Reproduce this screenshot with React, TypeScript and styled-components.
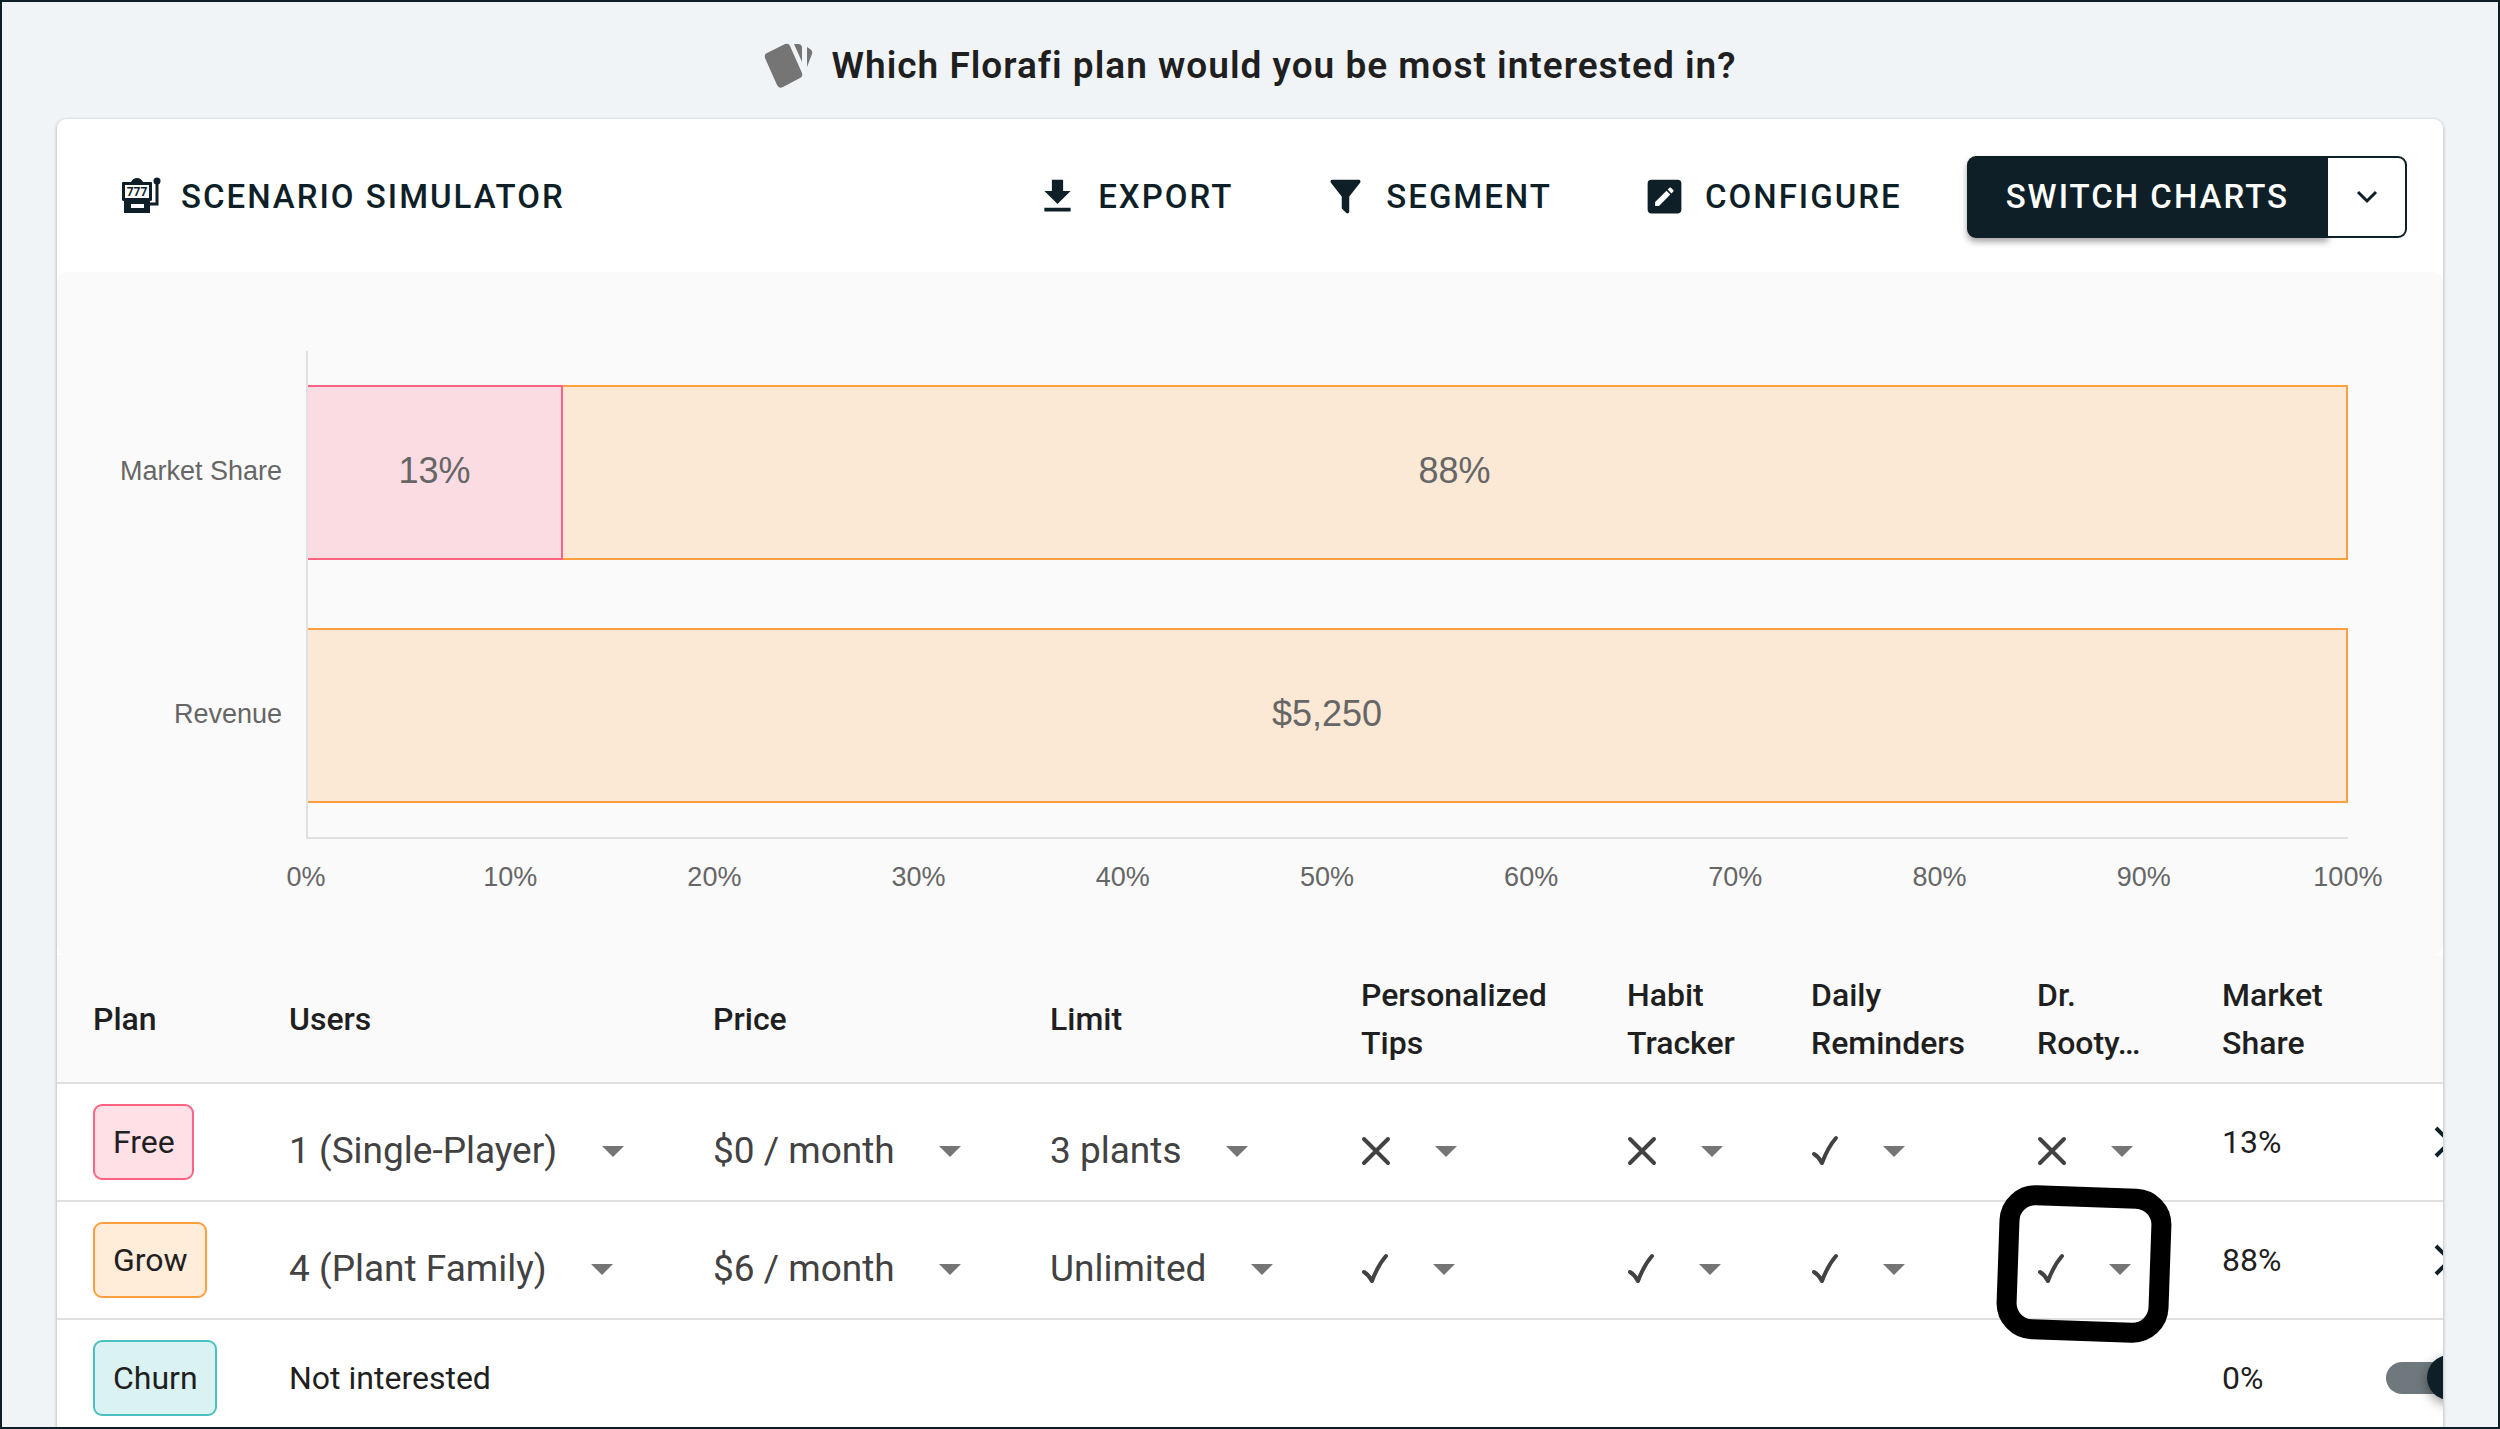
import React from "react";
import styled, { createGlobalStyle } from "styled-components";

const ink = "#0f1f27";
const line = "#e0e0e0";

const GlobalStyle = createGlobalStyle`
  *, *::before, *::after { box-sizing: border-box; }
  body {
    margin: 0;
    font-family: Roboto, "Liberation Sans", sans-serif;
    color: #1f1f1f;
    background: #f0f4f7;
  }
  button, select { font: inherit; }
`;

const Page = styled.main`
  height: 100vh;
  overflow: hidden;
  padding: 0 55px;
  border: 2px solid ${ink};
  background: #f0f4f7;
`;

const Heading = styled.header`
  display: flex;
  align-items: center;
  justify-content: center;
  gap: 18px;
  height: 117px;
  padding-top: 10px;

  h1 {
    margin: 0;
    font-size: 37px;
    font-weight: 600;
    line-height: 54px;
    letter-spacing: 1px;
  }
`;

const Card = styled.section`
  overflow: hidden;
  background: #fff;
  border-radius: 9px;
  box-shadow: 0 2px 4px rgba(0, 0, 0, 0.2), 0 0 3px rgba(0, 0, 0, 0.12);
`;

const Toolbar = styled.div`
  display: flex;
  align-items: center;
  gap: 40px;
  height: 153px;
  padding: 2px 36px 0;
`;

const Spacer = styled.span`
  flex: 1;
`;

const TextButton = styled.button`
  display: flex;
  align-items: center;
  gap: 18px;
  padding: 16px 25px;
  border: 0;
  background: none;
  color: ${ink};
  font-size: 33px;
  font-weight: 500;
  line-height: 48px;
  letter-spacing: 2px;
  text-transform: uppercase;
  white-space: nowrap;
`;

const ButtonIcon = styled.svg`
  width: 45px;
  height: 45px;
  flex: none;
  fill: currentColor;
`;

const SplitButton = styled.div`
  display: flex;
  height: 82px;
`;

const SplitMain = styled.button`
  padding: 0 37px;
  border: 2px solid ${ink};
  border-radius: 9px 0 0 9px;
  background: ${ink};
  color: #fff;
  font-size: 33px;
  font-weight: 500;
  letter-spacing: 2px;
  text-transform: uppercase;
  white-space: nowrap;
  box-shadow: 0 4px 6px rgba(0, 0, 0, 0.35);
`;

const SplitToggle = styled.button`
  display: flex;
  align-items: center;
  justify-content: center;
  width: 79px;
  padding: 0;
  border: 2px solid ${ink};
  border-left: 0;
  border-radius: 0 9px 9px 0;
  background: #fff;
  color: ${ink};
`;

const ChartPanel = styled.div`
  display: grid;
  grid-template-columns: 249px 1fr;
  align-content: start;
  height: 683px;
  padding: 79px 95px 0 0;
  background: #fafafa;
  border-radius: 9px;
  font-family: "Liberation Sans", Arial, sans-serif;
  color: #666;
`;

const CategoryLabels = styled.div`
  display: grid;
  grid-template-rows: 243px 243px;
  align-items: center;
  justify-items: end;
  padding-right: 24px;
  height: 486px;
  font-size: 27px;
  line-height: 32px;

  span {
    padding-bottom: 3px;
  }
`;

const Plot = styled.div`
  display: grid;
  grid-template-rows: 243px 243px;
  align-items: center;
  height: 488px;
  border-left: 2px solid ${line};
  border-bottom: 2px solid ${line};
`;

const BarRow = styled.div`
  display: flex;
  height: 175px;
`;

const Segment = styled.div<{ $tone: "pink" | "orange" }>`
  display: flex;
  align-items: center;
  justify-content: center;
  padding-bottom: 3px;
  border: 2px solid ${(p) => (p.$tone === "pink" ? "#ff6384" : "#ff9f40")};
  border-left: 0;
  background: ${(p) => (p.$tone === "pink" ? "#fbdce3" : "#fbe8d5")};
  font-size: 36px;
`;

const Ticks = styled.div`
  grid-column: 2;
  display: flex;
  justify-content: space-between;
  padding-top: 22px;
  font-size: 27px;
  line-height: 32px;

  span {
    display: flex;
    justify-content: center;
    width: 0;
  }
`;

const TableScroller = styled.div`
  overflow: hidden;
`;

const Table = styled.table`
  width: 2493px;
  table-layout: fixed;
  border-collapse: separate;
  border-spacing: 0;
  font-size: 32px;
  line-height: 48px;
`;

const HeadCell = styled.th`
  height: 129px;
  padding: 0 36px;
  border-bottom: 2px solid ${line};
  background: #fafafa;
  font-weight: 500;
  text-align: left;
`;

const Cell = styled.td`
  position: relative;
  height: 118px;
  padding: 0 36px;
  border-bottom: 2px solid ${line};
  white-space: nowrap;
`;

const tones = {
  pink: ["#ffe0e6", "#ff6384"],
  orange: ["#ffecd9", "#ff9f40"],
  teal: ["#dbf2f2", "#4bc0c0"],
};

const Chip = styled.span<{ $tone: keyof typeof tones }>`
  display: inline-block;
  padding: 12px 17px 12px 18px;
  border: 2px solid ${(p) => tones[p.$tone][1]};
  border-radius: 9px;
  background: ${(p) => tones[p.$tone][0]};
  vertical-align: middle;
`;

const SelectBox = styled.span`
  position: relative;
  display: inline-flex;
  align-items: center;
  padding-top: 18px;
  vertical-align: middle;
`;

const Select = styled.select<{ $markWidth?: number }>`
  appearance: none;
  height: 54px;
  padding: 0 82px 0 0;
  border: 0;
  background: none;
  color: ${(p) => (p.$markWidth ? "transparent" : "#424242")};
  font-size: 37px;
  width: ${(p) => (p.$markWidth ? `${p.$markWidth}px` : "auto")};
`;

const Arrow = styled.svg`
  position: absolute;
  right: 16px;
  width: 22px;
  height: 11px;
  fill: #757575;
  pointer-events: none;
`;

const Mark = styled.svg`
  position: absolute;
  left: 0;
  width: 30px;
  height: 32px;
  fill: none;
  stroke: #424242;
  stroke-width: 4;
  stroke-linecap: round;
  stroke-linejoin: round;
  pointer-events: none;
`;

const Highlight = styled.span`
  position: absolute;
  top: 62px;
  left: 83px;
  width: 172px;
  height: 154px;
  border: 20px solid #000;
  border-radius: 36px;
  transform: translate(-50%, -50%) rotate(2deg);
  pointer-events: none;
`;

const RemoveButton = styled.button`
  display: block;
  margin-left: 48px;
  padding: 0;
  border: 0;
  background: none;
  color: ${ink};

  svg { display: block; }
`;

const Switch = styled.input`
  appearance: none;
  display: block;
  position: relative;
  width: 76px;
  height: 32px;
  margin: 0;
  border-radius: 16px;
  background: #6f797d;

  &::before {
    content: "";
    position: absolute;
    top: -7px;
    left: 41px;
    width: 45px;
    height: 45px;
    border-radius: 50%;
    background: ${ink};
    box-shadow: 0 4px 12px rgba(0, 0, 0, 0.4);
  }
`;

const columns: [string, number][] = [
  ["Plan", 196],
  ["Users", 424],
  ["Price", 337],
  ["Limit", 311],
  ["Personalized Tips", 266],
  ["Habit Tracker", 184],
  ["Daily Reminders", 226],
  ["Dr. Rooty…", 185],
  ["Market Share", 164],
  ["", 200],
];

const features = ["Personalized Tips", "Habit Tracker", "Daily Reminders", "Dr. Rooty"];

type Plan = {
  name: string;
  tone: keyof typeof tones;
  choices: [string, string, string];
  marks: boolean[];
  share: string;
  highlighted?: number;
};

const plans: Plan[] = [
  {
    name: "Free",
    tone: "pink",
    choices: ["1 (Single-Player)", "$0 / month", "3 plants"],
    marks: [false, false, true, false],
    share: "13%",
  },
  {
    name: "Grow",
    tone: "orange",
    choices: ["4 (Plant Family)", "$6 / month", "Unlimited"],
    marks: [true, true, true, true],
    share: "88%",
    highlighted: 3,
  },
];

const ticks = Array.from({ length: 11 }, (_, i) => `${i * 10}%`);

function DownArrow() {
  return (
    <Arrow viewBox="0 0 22 11" aria-hidden="true">
      <path d="M0 0h22L11 11z" />
    </Arrow>
  );
}

function ChoiceSelect({ label, value }: { label: string; value: string }) {
  return (
    <SelectBox>
      <Select aria-label={label} defaultValue={value}>
        <option>{value}</option>
      </Select>
      <DownArrow />
    </SelectBox>
  );
}

function MarkSelect({ label, on }: { label: string; on: boolean }) {
  return (
    <SelectBox>
      <Select $markWidth={on ? 110 : 112} aria-label={label}>
        <option>{on ? "✓" : "✕"}</option>
      </Select>
      <Mark viewBox="0 0 30 32" aria-hidden="true">
        {on ? <path d="M3 19q5 3 8 9Q17 12 25 3" /> : <path d="M3 4l24 24M27 4L3 28" />}
      </Mark>
      <DownArrow />
    </SelectBox>
  );
}

export default function App() {
  return (
    <>
      <GlobalStyle />
      <Page>
        <Heading>
          <svg width="50" height="46" viewBox="0 0 50 46" fill="#757575" aria-hidden="true">
            <path d="M3 10L21 1q4-1 5 2l12 27q1 4-2 5l-17 9q-4 2-6-2L1 15q-1-4 2-5z" />
            <path d="M30 1h4q4 0 4 4v14zM43 4l3 2q3 2 2 5l-5 13z" />
          </svg>
          <h1>Which Florafi plan would you be most interested in?</h1>
        </Heading>

        <Card>
          <Toolbar>
            <TextButton type="button">
              <ButtonIcon viewBox="0 0 45 45" aria-hidden="true">
                <path
                  fillRule="evenodd"
                  d="M5 8h8q2-4 6-4t6 4h8q1 0 1 1v17q0 1-2 1v12H6V27q-2 0-2-1V9q0-1 1-1zM7 11v13h24V11zM13 30v4h13v-4z"
                />
                <path d="M39 9v21h-7" fill="none" stroke="currentColor" strokeWidth="3" />
                <circle cx="39" cy="7" r="3.5" />
                <text x="19" y="22" textAnchor="middle" fontSize="12" fontWeight="700" letterSpacing="0">
                  777
                </text>
              </ButtonIcon>
              Scenario Simulator
            </TextButton>
            <Spacer />
            <TextButton type="button">
              <ButtonIcon viewBox="0 0 24 24" aria-hidden="true">
                <path d="M5 20h14v-2H5v2zM19 9h-4V3H9v6H5l7 7 7-7z" />
              </ButtonIcon>
              Export
            </TextButton>
            <TextButton type="button">
              <ButtonIcon viewBox="0 0 24 24" aria-hidden="true">
                <path d="M14 12v7.88c.04.3-.06.62-.29.83a.996.996 0 0 1-1.41 0l-2.01-2.01a.989.989 0 0 1-.29-.83V12h-.03L4.21 4.62a1 1 0 0 1 .17-1.4c.19-.14.4-.22.62-.22h14c.22 0 .43.08.62.22a1 1 0 0 1 .17 1.4L14.03 12H14z" />
              </ButtonIcon>
              Segment
            </TextButton>
            <TextButton type="button">
              <ButtonIcon viewBox="0 0 24 24" aria-hidden="true">
                <path d="M19 3H5a2 2 0 0 0-2 2v14c0 1.1.9 2 2 2h14c1.1 0 2-.9 2-2V5a2 2 0 0 0-2-2m-2.3 6.35-1 1-2.05-2.05 1-1c.21-.22.56-.22.77 0l1.28 1.28c.22.21.22.56 0 .77M7 14.94l6.06-6.06 2.06 2.06L9.06 17H7v-2.06z" />
              </ButtonIcon>
              Configure
            </TextButton>
            <SplitButton>
              <SplitMain type="button">Switch Charts</SplitMain>
              <SplitToggle type="button" aria-label="More charts">
                <svg width="22" height="14" viewBox="0 0 22 14" fill="none" stroke="currentColor" strokeWidth="3">
                  <path d="M2 2l9 9 9-9" />
                </svg>
              </SplitToggle>
            </SplitButton>
          </Toolbar>

          <ChartPanel>
            <CategoryLabels>
              <span>Market Share</span>
              <span>Revenue</span>
            </CategoryLabels>
            <Plot>
              <BarRow>
                <Segment $tone="pink" style={{ width: "12.5%" }}>13%</Segment>
                <Segment $tone="orange" style={{ width: "87.5%" }}>88%</Segment>
              </BarRow>
              <BarRow>
                <Segment $tone="orange" style={{ width: "100%" }}>$5,250</Segment>
              </BarRow>
            </Plot>
            <Ticks>
              {ticks.map((tick) => (
                <span key={tick}>{tick}</span>
              ))}
            </Ticks>
          </ChartPanel>

          <TableScroller>
            <Table>
              <colgroup>
                {columns.map(([name, width]) => (
                  <col key={name} style={{ width }} />
                ))}
              </colgroup>
              <thead>
                <tr>
                  {columns.map(([name]) => (
                    <HeadCell key={name} scope="col">{name}</HeadCell>
                  ))}
                </tr>
              </thead>
              <tbody>
                {plans.map((plan) => (
                  <tr key={plan.name}>
                    <Cell>
                      <Chip $tone={plan.tone}>{plan.name}</Chip>
                    </Cell>
                    {plan.choices.map((choice, i) => (
                      <Cell key={choice}>
                        <ChoiceSelect label={`${plan.name} ${columns[i + 1][0]}`} value={choice} />
                      </Cell>
                    ))}
                    {plan.marks.map((on, i) => (
                      <Cell key={features[i]}>
                        <MarkSelect label={`${plan.name} ${features[i]}`} on={on} />
                        {plan.highlighted === i && <Highlight />}
                      </Cell>
                    ))}
                    <Cell>{plan.share}</Cell>
                    <Cell>
                      <RemoveButton type="button" aria-label={`Remove ${plan.name}`}>
                        <svg width="32" height="32" viewBox="0 0 32 32" fill="none" stroke="currentColor" strokeWidth="4">
                          <path d="M2 2l28 28M30 2L2 30" />
                        </svg>
                      </RemoveButton>
                    </Cell>
                  </tr>
                ))}
                <tr>
                  <Cell>
                    <Chip $tone="teal">Churn</Chip>
                  </Cell>
                  <Cell colSpan={7}>Not interested</Cell>
                  <Cell>0%</Cell>
                  <Cell>
                    <Switch type="checkbox" role="switch" defaultChecked aria-label="Include churn" />
                  </Cell>
                </tr>
              </tbody>
            </Table>
          </TableScroller>
        </Card>
      </Page>
    </>
  );
}
